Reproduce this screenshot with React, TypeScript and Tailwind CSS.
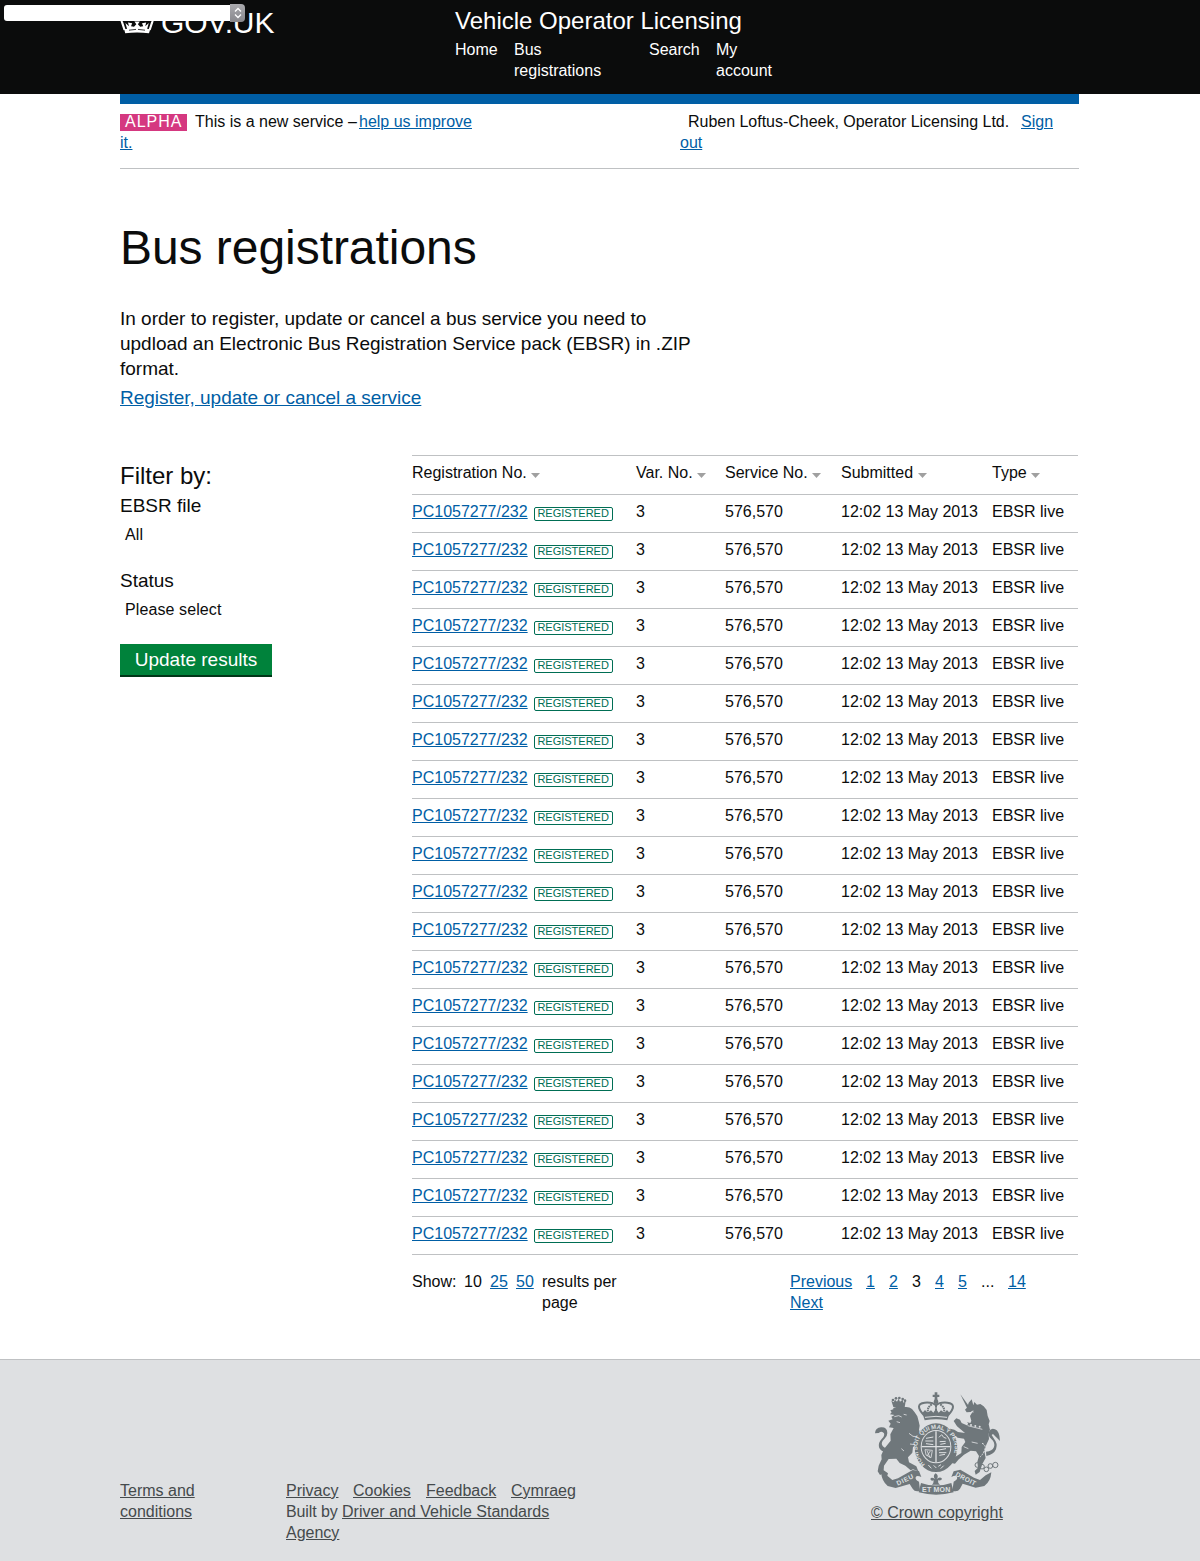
import React from "react";

const link = "text-[#005ea5] underline";
const footLink = "underline";
const grid = "grid grid-cols-[224px_89px_116px_151px_86px]";

function Crown() {
  return (
    <svg className="mt-[7px] h-[27px] w-[34px] shrink-0" viewBox="0 0 34 27" fill="#fff">
      <path d="M4.2 22.3Q17 19.8 30.2 22.3L29 26.3Q17 24.6 5.2 26.3Z" />
      <path d="M4.6 23 1.8 14.5Q1 10 6 8.5q5-1 9 2.5M29.6 23l2.8-8.5q.8-4.5-4.2-6-5-1-9 2.5" fill="none" stroke="#fff" strokeWidth="2.2" />
      <path d="M16 4h2v2.5h2v2h-2V12h-2V8.5h-2v-2h2z" />
      <path d="m7.400 23-2-7 3.600 3.200-1-3.700 4.200.8-1.200 2.900 3 .5 2.300-2.500-1.900-2.700h5.400l-1.900 2.700 2.300 2.500 3-.5-1.200-2.900 4.200-.8-1 3.700 3.600-3.200-2 7Z" />
      <path d="m9 23.200 7-.8M18 22.400l7 .8" stroke="#0b0c0c" strokeWidth="0.800" />
    </svg>
  );
}

function RoyalArms() {
  return (
    <svg className="h-[105px] w-[127px]" viewBox="27 17 381 315" fill="#6f777b">
      {/* lion */}
      <path d="M85 65 79 46l7 5 4-8 6 6 5-9 4 9 8-6 2 9 7-4-3 18Z" />
      <g>
        <circle cx="84" cy="44" r="4" /><circle cx="93" cy="39" r="4" /><circle cx="103" cy="38" r="4" /><circle cx="113" cy="41" r="4" /><circle cx="120" cy="46" r="4" />
      </g>
      <path d="M85 68q18-8 36-3 12-1 20 6l8 10 8 12 4 15 3 13-2 12 3 9-9 12 2 10 14 5-6 11-14-3-8 9-2 16-13 14 3 15 22 12 6 15-16-6-7 3-16-14-17-8-10-13-23 1-14 20-1 14 13 9-3 10-13-9-8 4-7-11 3-17 9-19-1-13 8-18 20-25-1-19 10-19-14-2 5-11-7-9 13-4-4-8 10-5-14-2 5-6-4-6 9-3Z" />
      <path d="M65 201q-18-1-23-15-3-14 8-25 10-9 7-17-6-9-16-1l-11 1q1-17 18-18 19-1 19 17 0 11-9 18-10 10-7 17 4 9 17 12Z" />
      <path d="m88 94 13-3 9 4m6-8 9 2m-30 20 10 3m27 32 12 9 13 1m-22 22 23 3m-49 11 8 7" fill="none" stroke="#dee0e2" strokeWidth="2.5" />
      {/* unicorn */}
      <path d="m286 27 32 44-10 1Z" />
      <path d="m325 60 3-10 8 8 10-2 10 7 9 11 3 18 6 15-3 10 4 16-4 12 1 16-8 17-6 20 4 20-10 18-8 24-12 8-3-11 10-10-2-18 5-17-9-14-16-2-20 12-17 15-10 12-11-2 10-17 20-13 1-18 11-15-4-10-19-3-14-10-11-8 2-9 13 3 11 7 21 3-24-20-10-16 8-8 11 4 5 10 22 10 7-17-4-14 11-18-9 6-12 1-5-8 7-7 4-14 9-10Z" />
      <path d="M363 199q19-1 24-14 4-14-8-24-12-11-7-22 6-12 18-7 14 5 15 35l-12-12-9-9-4 3 8 13q11 13 5 30-7 16-29 20Z" />
      <path d="m307 111 48 12-3 15-45-11Z" />
      <path d="m308 121 44 11m-32-53 6 1m-6 90 18 4m-42 10 14 6" fill="none" stroke="#dee0e2" strokeWidth="2.5" />
      <g fill="#dee0e2"><circle cx="306" cy="115" r="3" /><circle cx="318" cy="119" r="3" /><circle cx="331" cy="122" r="3" /><circle cx="344" cy="124" r="3" /></g>
      <g fill="none" stroke="#6f777b" strokeWidth="3">
        <circle cx="337" cy="239" r="7" /><circle cx="351" cy="244" r="7" /><circle cx="364" cy="252" r="7" /><circle cx="376" cy="242" r="7" /><circle cx="391" cy="239" r="8" />
      </g>
      <path d="M351 174q14 5 8 20t-14 21" fill="none" stroke="#dee0e2" strokeWidth="3" strokeDasharray="6 3" />
      {/* crown above the shield */}
      <path d="M209 21h8v7h6v7h-6v10h-8V35h-6v-7h6Z" />
      <circle cx="213" cy="49" r="7" />
      <g fill="none" stroke="#6f777b" strokeWidth="6">
        <path d="M177 90q-31-34 2-38 24-2 34 8 10-10 34-8 33 4 2 38" />
        <path d="M190 86q-6-20 11-29m35 29q6-20-11-29M213 55v30" strokeDasharray="5 2" />
      </g>
      <path d="m172 83 8-9 8 8 10-7 7 7 8-12 8 12 7-7 10 7 8-8 8 9-7 22q-34-6-68 0Z" />
      <path d="M180 96q33-6 66 0" fill="none" stroke="#dee0e2" strokeWidth="3" />
      {/* garter and shield */}
      <ellipse cx="213" cy="187" rx="64" ry="73" />
      <ellipse cx="213" cy="184" rx="46" ry="50" fill="#dee0e2" />
      <ellipse cx="213" cy="184" rx="43" ry="47" />
      <path d="M170 184h86M213 138v93" stroke="#dee0e2" strokeWidth="4" />
      <path d="m183 159 22-4m-24 12h24m-22 8 22 3m17-22 8-8 6 8 8 3m-20 10 18-1m-16 9 16-3m-21 20 22-4m-21 12h22m-21 8 17-3" fill="none" stroke="#dee0e2" strokeWidth="3" />
      <path d="m180 193 22 2-4 22-15-8Zm6 3 9 21m1-20-10 15" fill="none" stroke="#dee0e2" strokeWidth="2.5" />
      <path id="garter" d="M180 237C146 209 145 138 213 130C281 138 281 209 246 237" fill="none" />
      <text fill="#dee0e2" fontFamily="Liberation Sans" fontWeight="700" fontSize="18">
        <textPath href="#garter" textLength="250">HONI SOIT QUI MAL Y PENSE</textPath>
      </text>
      <path d="m190 239 9 10m7-9 8 8m6-5 8-5m-1 12 9-9" stroke="#dee0e2" strokeWidth="3" />
      {/* motto ribbon */}
      <path d="m48 261 17 9 17 14 17-5 44-25 19 3 7 18q-14-7-17 1-2 8 10 13l3 27q-15 5-22-6l-9-14-42 12-24-6q-17-13-20-41Z" />
      <path d="m379 261-17 9-17 14-18-7-41-24-20 5-7 17q14-8 17 0 3 8-10 14l-4 27q16 5 23-6l8-15 39 12 26-5q19-13 21-41Z" />
      <path d="M168 293q44 15 91 0l7 28q-53 14-105 0Z" />
      <path d="M192 263q21 8 42 0l14 8-4 22q-31 8-63 0l-4-22Z" fill="#dee0e2" />
      <path d="M212 264q-10 8-2 17-11-8-14 0 2 7 10 4l-1 8-4 5h24l-5-5-1-8q11 2 12-5-6-8-16 1 8-9-3-17Z" />
      <path d="m172 277-5 16m88-16 5 16" stroke="#dee0e2" strokeWidth="3" />
      <g fill="#dee0e2" fontFamily="Liberation Sans" fontWeight="700">
        <text x="98" y="301" fontSize="20" textLength="54" transform="rotate(-25 98 301)">DIEU</text>
        <text x="171" y="321" fontSize="21" textLength="85">ET MON</text>
        <text x="270" y="271" fontSize="20" textLength="66" transform="rotate(28 270 271)">DROIT</text>
      </g>
    </svg>
  );
}

function Header() {
  return (
    <header className="relative h-[94px] bg-[#0b0c0c] text-white">
      <div className="mx-auto flex w-[960px]">
        <div className="flex w-[335px]">
          <Crown />
          <span className="ml-[7px] mt-[5px] text-[30px] leading-[35px] tracking-[-0.1px]">GOV.UK</span>
        </div>
        <div className="pt-[6px]">
          <div className="text-[24px] leading-[30px]">Vehicle Operator Licensing</div>
          <nav className="mt-[3px] flex">
            <a className="w-[59px]">Home</a>
            <a className="w-[135px]">Bus<br />registrations</a>
            <a className="w-[67px]">Search</a>
            <a>My<br />account</a>
          </nav>
        </div>
      </div>
      <div className="absolute left-[4px] top-[4px] flex h-[18px] w-[241px] items-center">
        <div className="h-[16px] flex-1 rounded-l-[3px] bg-white" />
        <div className="flex h-[18px] w-[15px] items-center justify-center rounded-r-[4px] bg-gradient-to-b from-[#aaaaae] to-[#88888d]">
          <svg className="h-[12px] w-[8px]" viewBox="0 0 8 12" fill="none" stroke="#fff" strokeWidth="1.3">
            <path d="m1 4.500 3-3 3 3M1 7.500l3 3 3-3" />
          </svg>
        </div>
      </div>
    </header>
  );
}

const columns = ["Registration No.", "Var. No.", "Service No.", "Submitted", "Type"];

function ResultsTable() {
  return (
    <div className="w-[666px] border-t border-[#bfc1c3]">
      <div className={`${grid} h-[39px] border-b border-[#bfc1c3] pt-[6px]`}>
        {columns.map((c) => (
          <div key={c} className="flex whitespace-nowrap">
            {c}
            <svg className="ml-[4.500px] mt-[11px] h-[5px] w-[9px]" viewBox="0 0 9 5">
              <path d="M0 0h9L4.500 5Z" fill="#a0a0a0" />
            </svg>
          </div>
        ))}
      </div>
      {Array.from({ length: 20 }, (_, i) => (
        <div key={i} className={`${grid} h-[38px] border-b border-[#bfc1c3] pt-[6px]`}>
          <div className="flex">
            <a className={link}>PC1057277/232</a>
            <span className="ml-[6px] mt-[6px] h-[14px] w-[79px] rounded-[2px] border border-[#006e54] text-center text-[11px] leading-[10px] text-[#006e54]">REGISTERED</span>
          </div>
          <div>3</div>
          <div>576,570</div>
          <div>12:02 13 May 2013</div>
          <div>EBSR live</div>
        </div>
      ))}
      <div className="flex pt-[16px]">
        <div className="flex w-[378px]">
          <span className="w-[52px]">Show:</span>
          <span className="w-[26px]">10</span>
          <span className="w-[26px]"><a className={link}>25</a></span>
          <span className="w-[26px]"><a className={link}>50</a></span>
          <span>results per<br />page</span>
        </div>
        <div>
          <div className="flex">
            <span className="w-[76px]"><a className={link}>Previous</a></span>
            <span className="w-[23px]"><a className={link}>1</a></span>
            <span className="w-[23px]"><a className={link}>2</a></span>
            <span className="w-[23px]">3</span>
            <span className="w-[23px]"><a className={link}>4</a></span>
            <span className="w-[23px]"><a className={link}>5</a></span>
            <span className="w-[27px]">...</span>
            <a className={link}>14</a>
          </div>
          <a className={link}>Next</a>
        </div>
      </div>
    </div>
  );
}

export default function App() {
  return (
    <div className="h-[1561px] w-[1200px] overflow-hidden bg-white font-['Liberation_Sans',Arial,sans-serif] text-[16px] leading-[21px] text-[#0b0c0c]">
      <Header />
      <main className="mx-auto h-[1265px] w-[960px]">
        <div className="h-[10px] w-[959px] bg-[#005ea5]" />
        <div className="flex h-[65px] w-[959px] border-b border-[#bfc1c3] pt-[7px]">
          <div className="w-[560px]">
            <div className="flex">
              <strong className="mt-[3px] h-[17px] w-[67px] bg-[#d53880] pl-[5px] font-normal leading-[16px] tracking-[1px] text-white">ALPHA</strong>
              <span className="ml-[8px] w-[164px] whitespace-nowrap">This is a new service –</span>
              <a className={link}>help us improve</a>
            </div>
            <a className={link}>it.</a>
          </div>
          <div>
            <div className="flex">
              <span className="ml-[8px] w-[333px] tracking-[-0.02px]">Ruben Loftus-Cheek, Operator Licensing Ltd.</span>
              <a className={link}>Sign</a>
            </div>
            <a className={link}>out</a>
          </div>
        </div>
        <h1 className="mt-[54px] text-[48px] leading-[50px] tracking-[-0.05px]">Bus registrations</h1>
        <p className="mt-[33px] text-[19px] leading-[25px] tracking-[-0.01px]">
          In order to register, update or cancel a bus service you need to<br />
          updload an Electronic Bus Registration Service pack (EBSR) in .ZIP<br />
          format.
        </p>
        <div className="mt-[4px] text-[19px] leading-[25px] tracking-[-0.02px]"><a className={link}>Register, update or cancel a service</a></div>
        <div className="mt-[45px] flex">
          <aside className="w-[292px] pt-[6px]">
            <h2 className="text-[24px] leading-[30px]">Filter by:</h2>
            <div className="mt-[2px] text-[19px] leading-[25px]">EBSR file</div>
            <div className="mt-[6px] pl-[5px] tracking-[0.1px]">All</div>
            <div className="mt-[23px] text-[19px] leading-[25px]">Status</div>
            <div className="mt-[6px] pl-[5px] tracking-[0.1px]">Please select</div>
            <button className="mt-[24px] block h-[33px] w-[152px] border-b-2 border-[#003618] bg-[#00823b] text-[19px] leading-[31px] text-white">Update results</button>
          </aside>
          <ResultsTable />
        </div>
      </main>
      <footer className="h-[202px] border-t border-[#bfc1c3] bg-[#dee0e2] text-[#454a4c]">
        <div className="mx-auto flex w-[960px]">
          <div className="w-[166px] pt-[120px]"><a className={footLink}>Terms and<br />conditions</a></div>
          <div className="w-[585px] pt-[120px]">
            <div className="flex">
              <span className="w-[67px]"><a className={footLink}>Privacy</a></span>
              <span className="w-[73px]"><a className={footLink}>Cookies</a></span>
              <span className="w-[85px]"><a className={footLink}>Feedback</a></span>
              <a className={footLink}>Cymraeg</a>
            </div>
            <div><span className="tracking-[-0.1px]">Built by </span><a className={footLink}>Driver and Vehicle Standards<br />Agency</a></div>
          </div>
          <div className="pt-[31px]">
            <div className="ml-[3px] h-[111px]"><RoyalArms /></div>
            <a className={footLink}>© Crown copyright</a>
          </div>
        </div>
      </footer>
    </div>
  );
}
